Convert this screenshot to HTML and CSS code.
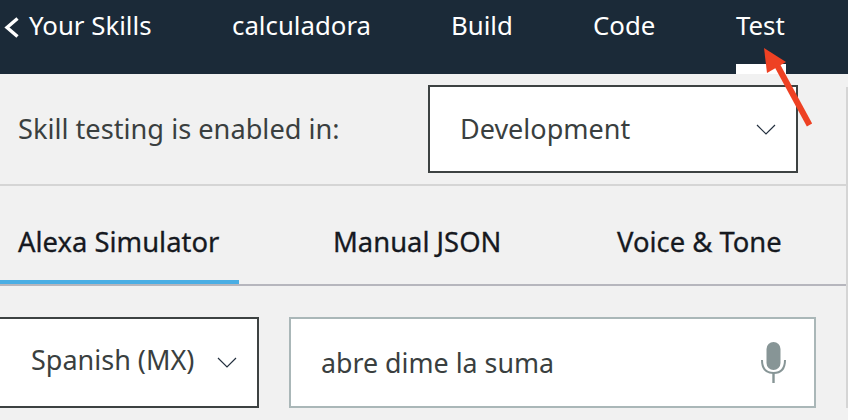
FILE: index.html
```html
<!DOCTYPE html>
<html lang="en">
<head>
<meta charset="utf-8">
<title>Alexa Simulator</title>
<link rel="stylesheet" href="styles.css">
</head>
<body>
<div class="page">
  <nav class="topbar">
    <a class="nav-item back">
      <svg class="back-icon" width="15" height="21" viewBox="0 0 15 21"><path d="M13.5 1.5 L3 10.5 L13.5 19.5" fill="none" stroke="#fff" stroke-width="3.4"/></svg>
      <span>Your Skills</span>
    </a>
    <a class="nav-item name">calculadora</a>
    <a class="nav-item build">Build</a>
    <a class="nav-item code">Code</a>
    <a class="nav-item test active">Test</a>
  </nav>
  <div class="content">
    <section class="env-row">
      <label class="env-label">Skill testing is enabled in:</label>
      <div class="select env-select">
        <span class="env-value">Development</span>
        <svg class="chev" width="20" height="11" viewBox="0 0 20 11"><path d="M1 1 L10 10 L19 1" fill="none" stroke="#232f3e" stroke-width="1.2"/></svg>
      </div>
    </section>
    <div class="tabs">
      <div class="tab selected">Alexa Simulator</div>
      <div class="tab manual">Manual JSON</div>
      <div class="tab voice">Voice &amp; Tone</div>
    </div>
    <section class="input-row">
      <div class="select lang-select">
        <span class="lang-value">Spanish (MX)</span>
        <svg class="chev" width="20" height="11" viewBox="0 0 20 11"><path d="M1 1 L10 10 L19 1" fill="none" stroke="#232f3e" stroke-width="1.2"/></svg>
      </div>
      <div class="utterance">
        <span>abre dime la suma</span>
        <svg class="mic" width="25" height="41" viewBox="0 0 25 41">
          <rect x="5.5" y="0" width="14" height="28" rx="7" fill="#879596"/>
          <path d="M1 18 C1 27 5.5 31 12.5 31 C19.5 31 24 27 24 18" fill="none" stroke="#879596" stroke-width="2"/>
          <path d="M12.5 31 V41" stroke="#879596" stroke-width="2.4"/>
        </svg>
      </div>
    </section>
  </div>
  <svg class="arrow" width="60" height="90" viewBox="0 0 60 90">
    <path d="M47.5 77 L15 17" stroke="#ee4123" stroke-width="6" fill="none"/>
    <path d="M2 0 L24 14 L5 25 Z" fill="#ee4123"/>
  </svg>
</div>
</body>
</html>
```
FILE: styles.css
```css
* { box-sizing: border-box; }
html, body { margin: 0; padding: 0; }
body {
  width: 848px;
  height: 420px;
  overflow: hidden;
  font-family: "Noto Sans", "Open Sans", sans-serif;
  background: #f1f1f1;
}
.page { position: relative; width: 848px; height: 420px; overflow: hidden; }

.topbar {
  height: 74px;
  background: #1b2a38;
  display: flex;
  color: #fff;
  font-size: 25.8px;
  line-height: 51px;
}
.nav-item { display: flex; align-items: flex-start; height: 74px; color: #fff; }
.back { margin-left: 4px; gap: 10px; width: 228px; }
.back-icon { margin-top: 17px; }
.name { width: 219px; }
.build { width: 142px; }
.code { width: 143px; }
.test { position: relative; width: 50px; }
.test.active::after {
  content: "";
  position: absolute;
  left: 0;
  right: 0;
  bottom: 0;
  height: 10px;
  background: #fff;
}

.content { position: relative; }
.content::after {
  content: "";
  position: absolute;
  top: 13px;
  right: 0;
  bottom: 0;
  width: 2px;
  background: #d5d5d5;
}

.env-row {
  height: 112px;
  padding: 11px 50px 0 18px;
  display: flex;
  justify-content: space-between;
  border-bottom: 2px solid #d5d5d5;
}
.env-label { font-size: 27.2px; line-height: 88px; color: #3a3f3f; }
.select {
  background: #fff;
  border: 2px solid #3d4242;
  display: flex;
  align-items: center;
  justify-content: space-between;
  font-size: 27px;
  color: #3a3f3f;
}
.env-select { width: 370px; height: 88px; padding: 0 20px 0 30px; }
.env-value { margin-bottom: 2px; }
.lang-value { margin-bottom: 6px; }

.tabs {
  height: 100px;
  display: flex;
  border-bottom: 2px solid #b6b6bd;
  color: #16191f;
  font-size: 27.4px;
  -webkit-text-stroke: 0.3px #16191f;
}
.tab { line-height: 112px; height: 98px; }
.selected { width: 239px; padding-left: 18px; border-bottom: 4px solid #4aaee4; }
.manual { width: 283px; padding-left: 94px; }
.voice { padding-left: 95px; }

.input-row {
  padding-top: 31px;
  display: flex;
  gap: 30px;
}
.lang-select { margin-left: -2px; width: 261px; height: 91px; padding: 0 20px 0 31px; }
.utterance {
  width: 527px;
  height: 91px;
  background: #fff;
  border: 2px solid #aab7b8;
  padding: 0 28px 0 30px;
  display: flex;
  align-items: center;
  justify-content: space-between;
  font-size: 26.8px;
  color: #3a3f3f;
}

.arrow { position: absolute; left: 762px; top: 48px; }
```
